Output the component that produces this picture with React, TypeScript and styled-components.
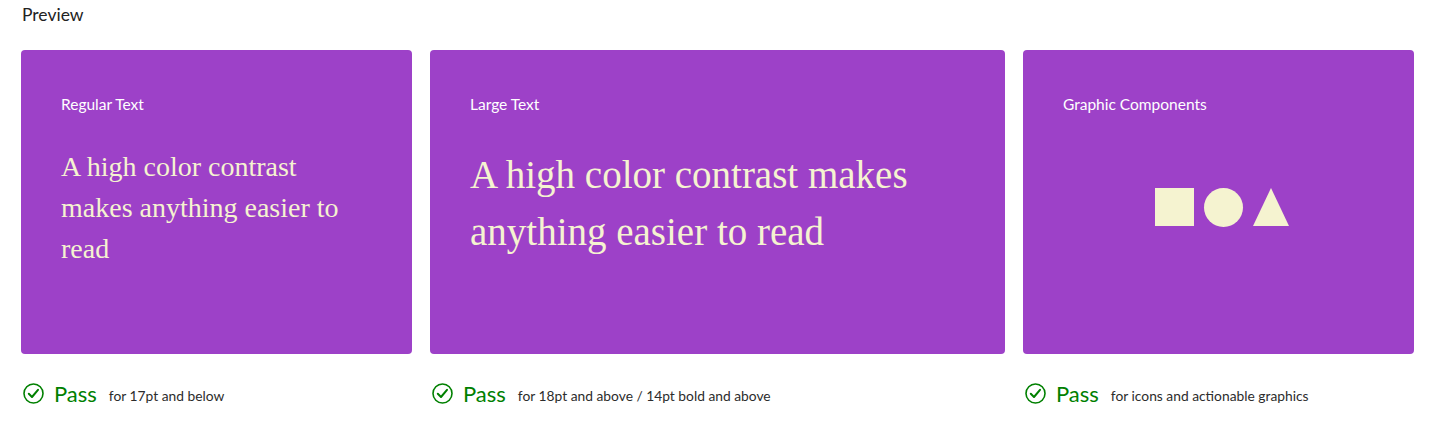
import React from "react";
import styled, { createGlobalStyle } from "styled-components";

const Global = createGlobalStyle`
  html, body { margin: 0; padding: 0; background: #ffffff; }
  body { font-family: Lato, "Noto Sans", sans-serif; }
`;

const Page = styled.div`
  padding: 4px 31px 0 21px;
`;

const Title = styled.h2`
  margin: 0 0 0 1px;
  font-size: 17.5px;
  font-weight: 400;
  line-height: 22px;
  color: #222222;
`;

const Grid = styled.div`
  display: grid;
  grid-template-columns: 391fr 575fr 391fr;
  column-gap: 18px;
  margin-top: 24px;
`;

const Column = styled.div`
  display: flex;
  flex-direction: column;
`;

const Card = styled.div`
  height: 304px;
  box-sizing: border-box;
  background: #9d41c8;
  border-radius: 4px;
  padding: 44px 40px 0 40px;
  display: flex;
  flex-direction: column;
`;

const Label = styled.div`
  font-size: 15.5px;
  line-height: 20px;
  color: #ffffff;
`;

const Sample = styled.p<{ $large?: boolean }>`
  margin: 32px 0 0 0;
  font-family: "Liberation Serif", "Times New Roman", serif;
  font-size: ${(p) => (p.$large ? "39px" : "28px")};
  line-height: ${(p) => (p.$large ? "57px" : "41px")};
  color: #f5f3d0;
`;

const Shapes = styled.div`
  flex: 1;
  display: flex;
  align-items: center;
  justify-content: center;
  gap: 10px;
  padding: 0 0 54px 6px;
`;

const Square = styled.div`
  width: 39px;
  height: 38px;
  background: #f5f3d0;
`;

const Circle = styled.div`
  width: 39px;
  height: 39px;
  border-radius: 50%;
  background: #f5f3d0;
`;

const Result = styled.div`
  display: flex;
  align-items: center;
  margin-top: 27px;
  padding-left: 2px;
  height: 24px;
`;

const PassWord = styled.span`
  font-size: 22px;
  color: #008000;
  margin-left: 10px;
`;

const Note = styled.span`
  font-size: 13.8px;
  color: #2c2c2c;
  margin-left: 12px;
  padding-top: 5px;
`;

const CheckIcon = () => (
  <svg width="21" height="21" viewBox="0 0 21 21" fill="none">
    <circle cx="10.5" cy="10.5" r="9.5" stroke="#008000" strokeWidth="1.6" />
    <path d="M5.8 10.8 L9 14 L15 6.8" stroke="#008000" strokeWidth="2" strokeLinecap="round" strokeLinejoin="round" />
  </svg>
);

const Triangle = () => (
  <svg width="36" height="38" viewBox="0 0 36 38">
    <polygon points="18,0 36,38 0,38" fill="#f5f3d0" />
  </svg>
);

const Pass = ({ note }: { note: string }) => (
  <Result>
    <CheckIcon />
    <PassWord>Pass</PassWord>
    <Note>{note}</Note>
  </Result>
);

export default function App() {
  return (
    <>
      <Global />
      <Page>
        <Title>Preview</Title>
        <Grid>
          <Column>
            <Card>
              <Label>Regular Text</Label>
              <Sample>A high color contrast makes anything easier to read</Sample>
            </Card>
            <Pass note="for 17pt and below" />
          </Column>
          <Column>
            <Card>
              <Label>Large Text</Label>
              <Sample $large>A high color contrast makes anything easier to read</Sample>
            </Card>
            <Pass note="for 18pt and above / 14pt bold and above" />
          </Column>
          <Column>
            <Card>
              <Label>Graphic Components</Label>
              <Shapes>
                <Square />
                <Circle />
                <Triangle />
              </Shapes>
            </Card>
            <Pass note="for icons and actionable graphics" />
          </Column>
        </Grid>
      </Page>
    </>
  );
}
